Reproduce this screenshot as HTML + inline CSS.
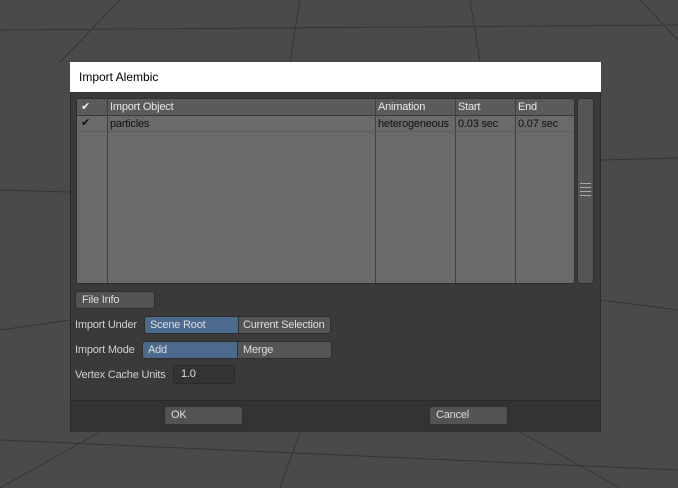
<!DOCTYPE html><html><head><style>
body{margin:0;width:678px;height:488px;overflow:hidden;background:#484a4c;font-family:"Liberation Sans",sans-serif;font-size:11px;letter-spacing:-0.2px;position:relative;white-space:nowrap}
.a{position:absolute}
.dlg{left:70px;top:62px;width:531px;height:370px;background:#3a3a3a;border:1px solid #2a2a2a;box-sizing:border-box}
.title{left:70px;top:62px;width:531px;height:30px;background:#fff;color:#000;font-size:12px;line-height:30px;padding-left:9px;box-sizing:border-box;letter-spacing:0}
.list{left:76px;top:98px;width:499px;height:186px;background:#6a6a6a;border:1px solid #2f2f2f;box-sizing:border-box;border-radius:3px;overflow:hidden}
.hdr{left:0;top:0;width:100%;height:16px;background:#5b5b5b;border-bottom:1px solid #3a3a3a}
.col{position:absolute;top:0;height:186px;border-left:1px solid #404040}
.t{position:absolute;white-space:nowrap}
.btn{background:#535353;border:1px solid #2e2e2e;border-radius:3px;box-sizing:border-box;color:#ddd;padding-left:6px;line-height:16px}
.lbl{color:#d0d0d0}
</style></head><body>
<svg class="a" style="left:0;top:0" width="678" height="488"><g stroke="#333537" stroke-width="1" fill="none">
<path d="M0 190 L70 192 M601 160 L678 158 M0 30 L678 25 M0 440 L678 470 M120 0 L60 62 M300 0 L290 62 M470 0 L480 62 M640 0 L678 40 M100 432 L0 488 M300 432 L280 488 M520 432 L620 488 M601 300 L678 310 M0 330 L70 320"/></g></svg>
<div class="a dlg"></div>
<div class="a" style="left:71px;top:400px;width:529px;height:31px;background:#333;border-top:1px solid #2a2a2a"></div>
<div class="a title">Import Alembic</div>
<div class="a list">
<div class="a hdr"></div>
<div class="col" style="left:30px"></div><div class="col" style="left:298px"></div><div class="col" style="left:378px"></div><div class="col" style="left:438px"></div>
<div class="a" style="left:0;top:32px;width:100%;border-top:1px solid #5e5e5e"></div>
<span class="t" style="left:4px;top:1px;color:#eee">✔</span>
<span class="t" style="left:33px;top:2px;color:#e8e8e8">Import Object</span>
<span class="t" style="left:301px;top:2px;color:#e8e8e8">Animation</span>
<span class="t" style="left:381px;top:2px;color:#e8e8e8">Start</span>
<span class="t" style="left:441px;top:2px;color:#e8e8e8">End</span>
<span class="t" style="left:4px;top:17px;color:#111">✔</span>
<span class="t" style="left:33px;top:19px;color:#111">particles</span>
<span class="t" style="left:301px;top:19px;color:#111">heterogeneous</span>
<span class="t" style="left:381px;top:19px;color:#111">0.03 sec</span>
<span class="t" style="left:441px;top:19px;color:#111">0.07 sec</span>
</div>
<div class="a" style="left:577px;top:98px;width:17px;height:186px;background:#555;border:1px solid #2e2e2e;box-sizing:border-box;border-radius:3px"></div>
<svg class="a" style="left:579px;top:182px" width="13" height="18"><g stroke="#aaa"><path d="M1 1.5H12M1 5.5H12M1 9.5H12M1 13.5H12"/></g></svg>
<div class="a btn" style="left:75px;top:291px;width:80px;height:18px">File Info</div>
<span class="a lbl" style="left:75px;top:319px">Import Under</span>
<div class="a" style="left:144px;top:316px;width:187px;height:18px;border:1px solid #2e2e2e;border-radius:3px;overflow:hidden;box-sizing:border-box;display:flex;line-height:16px;color:#ddd"><div style="width:93px;flex:none;background:#4b6a8e;padding-left:5px;box-sizing:border-box">Scene Root</div><div style="flex:1;background:#555;padding-left:4px;border-left:1px solid #2e2e2e;white-space:nowrap;overflow:hidden">Current Selection</div></div>
<span class="a lbl" style="left:75px;top:344px">Import Mode</span>
<div class="a" style="left:142px;top:341px;width:190px;height:18px;border:1px solid #2e2e2e;border-radius:3px;overflow:hidden;box-sizing:border-box;display:flex;line-height:16px;color:#ddd"><div style="width:94px;flex:none;background:#4b6a8e;padding-left:5px;box-sizing:border-box">Add</div><div style="flex:1;background:#555;padding-left:5px;border-left:1px solid #2e2e2e">Merge</div></div>
<span class="a lbl" style="left:75px;top:369px">Vertex Cache Units</span>
<div class="a" style="left:173px;top:365px;width:62px;height:19px;background:#333;border:1px solid #2a2a2a;border-radius:3px;box-sizing:border-box;color:#ddd;line-height:17px;padding-left:7px">1.0</div>
<div class="a btn" style="left:164px;top:406px;width:79px;height:19px;line-height:17px">OK</div>
<div class="a btn" style="left:429px;top:406px;width:79px;height:19px;line-height:17px">Cancel</div>
</body></html>
